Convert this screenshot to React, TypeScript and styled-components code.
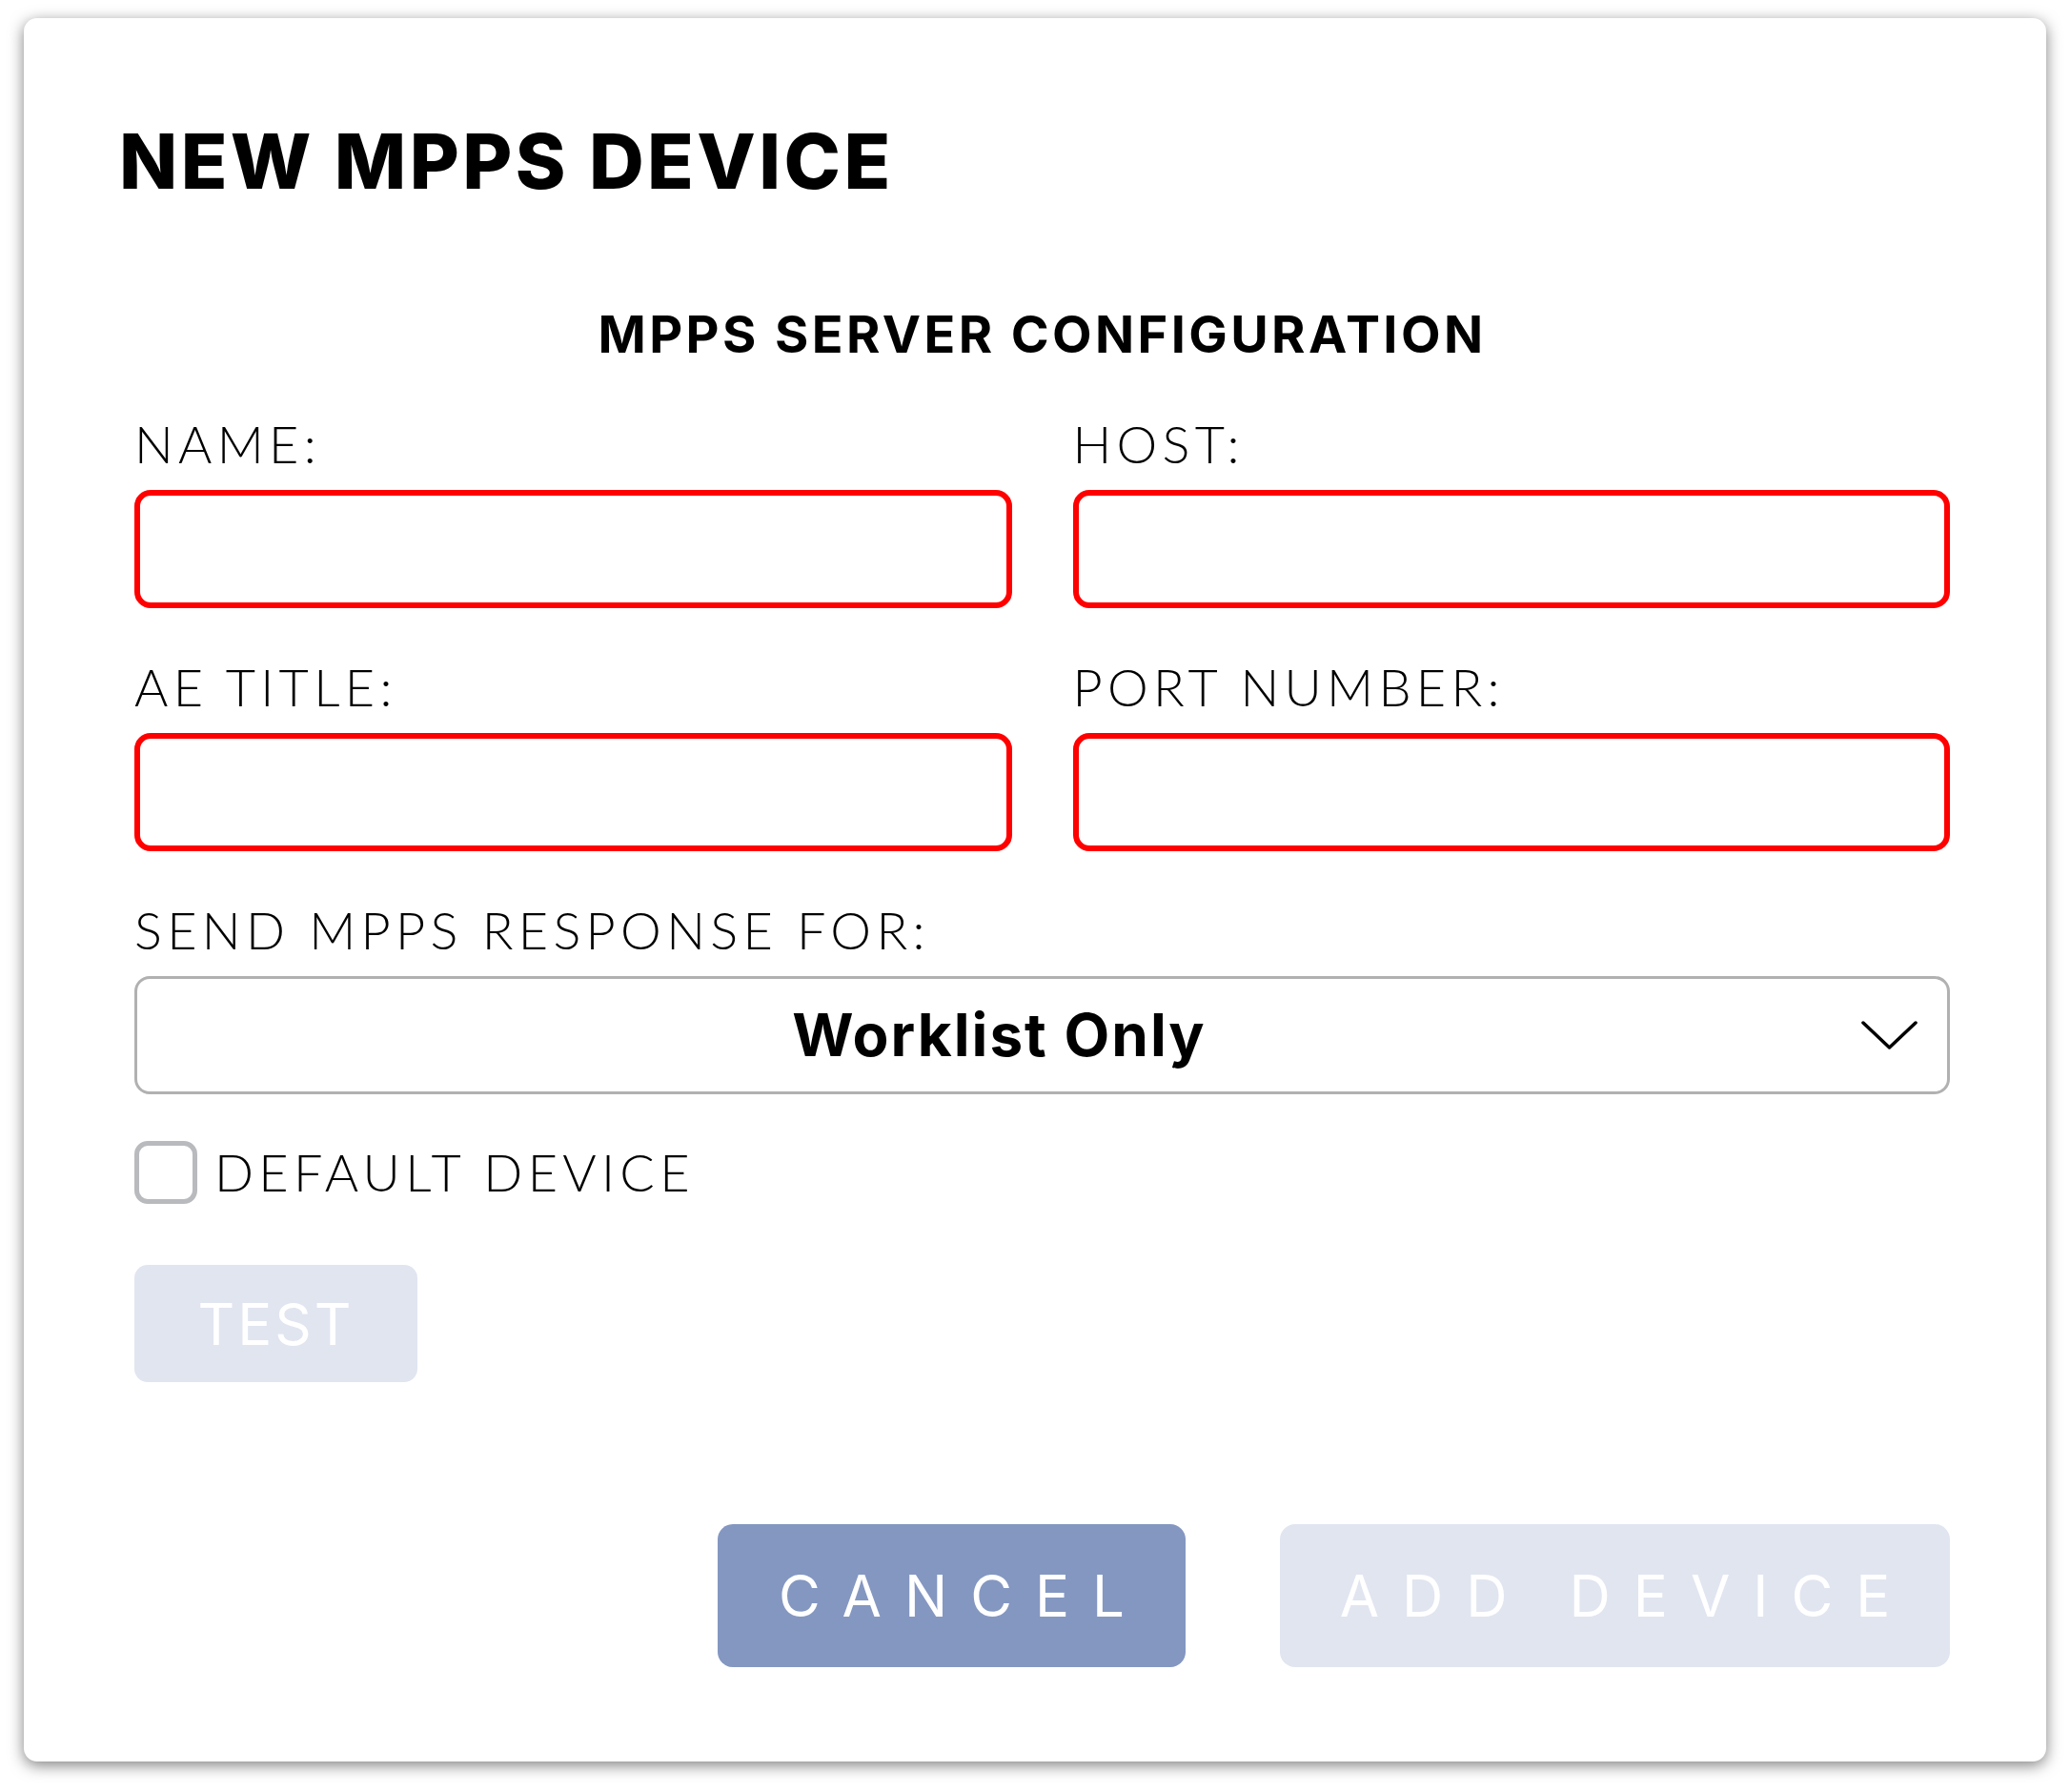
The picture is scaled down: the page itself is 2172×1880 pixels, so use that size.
import React from "react";
import styled, { createGlobalStyle } from "styled-components";

const GlobalStyle = createGlobalStyle`
  html, body {
    margin: 0;
    padding: 0;
    background: #ffffff;
  }
  body {
    font-family: Inter, "Noto Sans", "Liberation Sans", sans-serif;
    color: #000000;
  }
  *, *::before, *::after {
    box-sizing: border-box;
  }
`;

const Page = styled.div`
  padding: 19px 25px 32px;
`;

const Card = styled.section`
  background: #ffffff;
  border-radius: 14px;
  box-shadow: 0 4px 16px rgba(0, 0, 0, 0.5);
  padding: 102px 101px 99px 116px;
  display: flex;
  flex-direction: column;
`;

const Title = styled.h1`
  margin: 0 0 102px -16px;
  font-size: 80px;
  line-height: 96px;
  font-weight: 800;
  letter-spacing: 3.4px;
`;

const SectionTitle = styled.h2`
  margin: 0 0 51px;
  text-align: center;
  font-size: 54px;
  line-height: 64px;
  font-weight: 700;
  letter-spacing: 3.4px;
`;

const FieldGrid = styled.div`
  display: grid;
  grid-template-columns: 1fr 1fr;
  column-gap: 64px;
  row-gap: 51px;
`;

const Field = styled.div<{ $full?: boolean }>`
  display: flex;
  flex-direction: column;
  gap: 16px;
  grid-column: ${(p) => (p.$full ? "1 / -1" : "auto")};
`;

const Label = styled.label`
  font-family: Lato, Inter, sans-serif;
  font-size: 54px;
  line-height: 64px;
  font-weight: 300;
  letter-spacing: 5.3px;
`;

const TextInput = styled.input`
  height: 124px;
  width: 100%;
  border: 6px solid #ff0000;
  border-radius: 17px;
  background: #ffffff;
  outline: none;
  padding: 0 24px;
  font: inherit;
  font-size: 48px;
`;

const SelectBox = styled.div`
  height: 124px;
  display: flex;
  align-items: center;
  border: 3px solid #b1b1b1;
  border-radius: 16px;
  padding: 0 31px 0 5px;
  cursor: pointer;
`;

const SelectValue = styled.span`
  flex: 1;
  text-align: center;
  font-size: 62px;
  line-height: 64px;
  font-weight: 700;
  letter-spacing: 2px;
`;

const Chevron = styled.svg`
  width: 59px;
  height: 30px;
  margin-left: 5px;
  flex: none;
`;

const CheckRow = styled.div`
  margin-top: 49px;
  display: flex;
  align-items: center;
  gap: 18px;
`;

const Checkbox = styled.input`
  appearance: none;
  margin: 0;
  width: 66px;
  height: 66px;
  border: 5px solid #b9babd;
  border-radius: 14px;
  background: #ffffff;
  flex: none;
`;

const CheckLabel = styled.label`
  font-family: Lato, Inter, sans-serif;
  font-size: 54px;
  line-height: 64px;
  font-weight: 300;
  letter-spacing: 5.3px;
`;

const TestButton = styled.button`
  margin-top: 64px;
  align-self: flex-start;
  width: 297px;
  height: 123px;
  border: none;
  border-radius: 14px;
  background: #e1e5f0;
  color: #ffffff;
  font-family: inherit;
  font-size: 60px;
  font-weight: 400;
  letter-spacing: 3px;
  padding: 0;
`;

const Footer = styled.div`
  margin-top: 149px;
  display: flex;
  justify-content: flex-end;
  gap: 99px;
`;

const ActionButton = styled.button<{ $primary?: boolean; $width: number }>`
  width: ${(p) => p.$width}px;
  height: 150px;
  border: none;
  border-radius: 16px;
  background: ${(p) => (p.$primary ? "#8497c1" : "#e1e5f0")};
  color: #ffffff;
  font-family: inherit;
  font-size: 60px;
  font-weight: 400;
  letter-spacing: 24px;
  padding: 0 0 0 24px;
`;

export default function App() {
  return (
    <>
      <GlobalStyle />
      <Page>
        <Card>
          <Title>NEW MPPS DEVICE</Title>
          <SectionTitle>MPPS SERVER CONFIGURATION</SectionTitle>
          <FieldGrid>
            <Field>
              <Label htmlFor="name">NAME:</Label>
              <TextInput id="name" />
            </Field>
            <Field>
              <Label htmlFor="host">HOST:</Label>
              <TextInput id="host" />
            </Field>
            <Field>
              <Label htmlFor="ae">AE TITLE:</Label>
              <TextInput id="ae" />
            </Field>
            <Field>
              <Label htmlFor="port">PORT NUMBER:</Label>
              <TextInput id="port" />
            </Field>
            <Field $full>
              <Label>SEND MPPS RESPONSE FOR:</Label>
              <SelectBox role="button">
                <SelectValue>Worklist Only</SelectValue>
                <Chevron viewBox="0 0 59 30" fill="none">
                  <path
                    d="M2 2 L29.5 28 L57 2"
                    stroke="#000"
                    strokeWidth="3.5"
                    strokeLinecap="round"
                    strokeLinejoin="round"
                  />
                </Chevron>
              </SelectBox>
            </Field>
          </FieldGrid>
          <CheckRow>
            <Checkbox type="checkbox" id="default" />
            <CheckLabel htmlFor="default">DEFAULT DEVICE</CheckLabel>
          </CheckRow>
          <TestButton disabled>TEST</TestButton>
          <Footer>
            <ActionButton $primary $width={491}>
              CANCEL
            </ActionButton>
            <ActionButton $width={703} disabled>
              ADD DEVICE
            </ActionButton>
          </Footer>
        </Card>
      </Page>
    </>
  );
}
